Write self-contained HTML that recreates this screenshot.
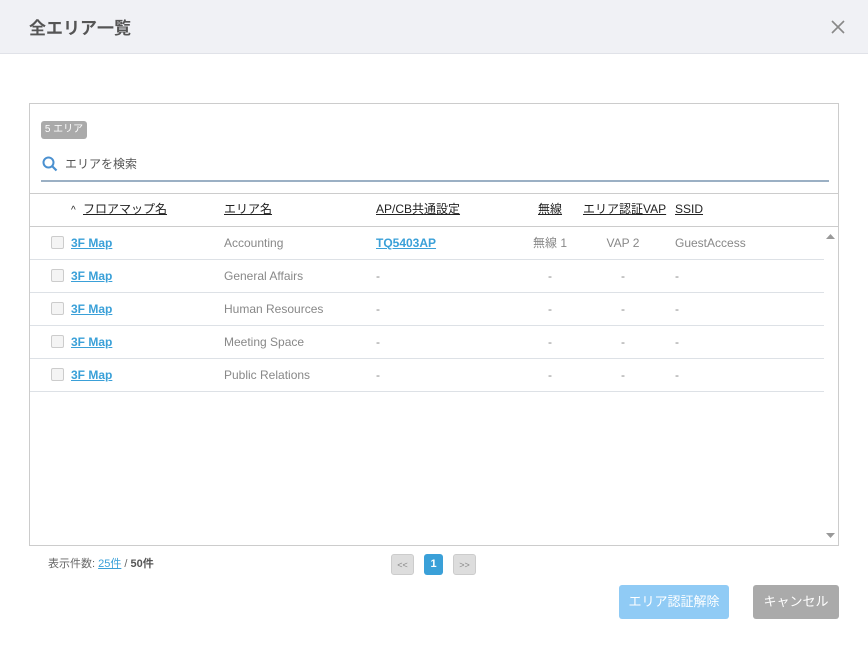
<!DOCTYPE html>
<html><head><meta charset="utf-8"><style>
*{box-sizing:border-box;margin:0;padding:0}
body{width:868px;height:648px;background:#fff;font-family:"Liberation Sans","Noto Sans CJK JP",sans-serif;position:relative;overflow:hidden;color:#333}
.hd{position:absolute;left:0;top:0;width:868px;height:54px;background:#f0f1f5;border-bottom:1px solid #e0e2e8}
.hd h1{position:absolute;left:29px;top:14px;font-size:17px;font-weight:bold;color:#555}
.x{position:absolute;left:830px;top:19px}
.panel{position:absolute;left:29px;top:103px;width:810px;height:443px;border:1px solid #ccc}
.badge{position:absolute;left:11px;top:17px;width:46px;height:18px;background:#aaa;border-radius:3px;color:#fff;font-size:10px;line-height:18px;text-align:center}
.srch{position:absolute;left:11px;top:46px;width:788px;height:32px;border-bottom:2px solid #9bb0c4}
.srch span{position:absolute;left:24px;top:6px;font-size:12px;line-height:16px;color:#555}
.th{position:absolute;top:89px;left:0;width:808px;height:34px;border-top:1px solid #ccc;border-bottom:1px solid #ccc}
.t{position:absolute;font-size:12px;line-height:16px;white-space:nowrap}
.th .t{top:7px;color:#222;text-decoration:underline}
.row{position:absolute;left:0;width:794px;height:33px;border-bottom:1px solid #dde1e6}
.row .t{top:8px;color:#888}
.row a.t{color:#3aa0d8;font-weight:bold;text-decoration:underline}
.cb{position:absolute;left:21px;top:9px;width:13px;height:13px;border:1px solid #ccc;border-radius:2px;background:#f4f4f4}
.c{text-align:center}
.sb{position:absolute;right:0;top:123px;width:15px;height:318px}
.pg{position:absolute;top:554px;height:21px;border-radius:3px;font-size:9px;text-align:center;line-height:21px}
.btn{position:absolute;top:585px;height:34px;border-radius:3px;color:#fff;font-size:13px;text-align:center;line-height:34px}
</style></head><body>
<div class="hd"><h1>全エリア一覧</h1>
<svg class="x" width="16" height="16" viewBox="0 0 16 16"><path d="M2 2L14 14M14 2L2 14" stroke="#888" stroke-width="1.6"/></svg></div>
<div class="panel">
<div class="badge">5 エリア</div>
<div class="srch"><svg width="16" height="16" viewBox="0 0 16 16" style="position:absolute;left:1px;top:6px"><circle cx="6.5" cy="6.5" r="5" stroke="#4a90d0" stroke-width="2" fill="none"/><path d="M10 10L14.5 14.5" stroke="#4a90d0" stroke-width="2.2"/></svg><span>エリアを検索</span></div>
<div class="th">
<span class="t" style="left:41px;text-decoration:none;font-size:10px;top:9px">^</span>
<span class="t" style="left:53px">フロアマップ名</span>
<span class="t" style="left:194px">エリア名</span>
<span class="t" style="left:346px">AP/CB共通設定</span>
<span class="t" style="left:508px">無線</span>
<span class="t" style="left:553px">エリア認証VAP</span>
<span class="t" style="left:645px">SSID</span>
</div>
<div class="row" style="top:123px"><div class="cb"></div><a class="t" style="left:41px">3F Map</a><span class="t" style="left:194px">Accounting</span><a class="t" style="left:346px">TQ5403AP</a><span class="t c" style="left:495px;width:50px">無線 1</span><span class="t c" style="left:568px;width:50px">VAP 2</span><span class="t" style="left:645px">GuestAccess</span></div>
<div class="row" style="top:156px"><div class="cb"></div><a class="t" style="left:41px">3F Map</a><span class="t" style="left:194px">General Affairs</span><span class="t" style="left:346px">-</span><span class="t c" style="left:495px;width:50px">-</span><span class="t c" style="left:568px;width:50px">-</span><span class="t" style="left:645px">-</span></div>
<div class="row" style="top:189px"><div class="cb"></div><a class="t" style="left:41px">3F Map</a><span class="t" style="left:194px">Human Resources</span><span class="t" style="left:346px">-</span><span class="t c" style="left:495px;width:50px">-</span><span class="t c" style="left:568px;width:50px">-</span><span class="t" style="left:645px">-</span></div>
<div class="row" style="top:222px"><div class="cb"></div><a class="t" style="left:41px">3F Map</a><span class="t" style="left:194px">Meeting Space</span><span class="t" style="left:346px">-</span><span class="t c" style="left:495px;width:50px">-</span><span class="t c" style="left:568px;width:50px">-</span><span class="t" style="left:645px">-</span></div>
<div class="row" style="top:255px"><div class="cb"></div><a class="t" style="left:41px">3F Map</a><span class="t" style="left:194px">Public Relations</span><span class="t" style="left:346px">-</span><span class="t c" style="left:495px;width:50px">-</span><span class="t c" style="left:568px;width:50px">-</span><span class="t" style="left:645px">-</span></div>
<div class="sb"><svg width="15" height="318"><path d="M3 12L7.5 7L12 12Z" fill="#999"/><path d="M3 306L7.5 311L12 306Z" fill="#999"/></svg></div>
</div>
<span class="t" style="left:48px;top:556px;font-size:11px;color:#666">表示件数: <span style="color:#3aa0d8;text-decoration:underline">25件</span> / <b style="color:#555">50件</b></span>
<div class="pg" style="left:391px;width:23px;background:#ddd;border:1px solid #ccc;color:#888">&lt;&lt;</div>
<div class="pg" style="left:424px;width:19px;background:#3aa0d8;color:#fff;font-size:11px;font-weight:bold">1</div>
<div class="pg" style="left:453px;width:23px;background:#ddd;border:1px solid #ccc;color:#888">&gt;&gt;</div>
<div class="btn" style="left:619px;width:110px;background:#90cbf5">エリア認証解除</div>
<div class="btn" style="left:753px;width:86px;background:#aaa">キャンセル</div>
</body></html>
